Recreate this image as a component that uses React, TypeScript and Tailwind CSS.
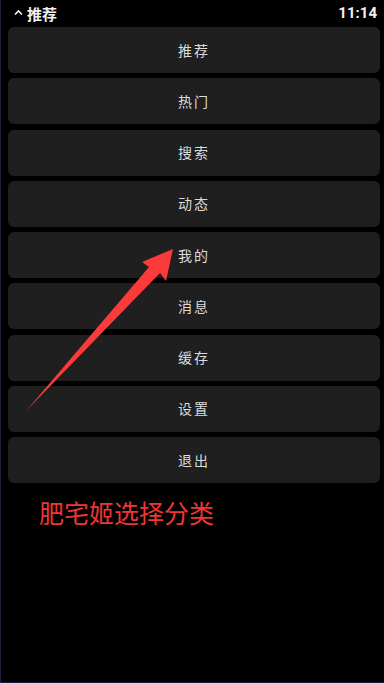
import React from "react";

const items = ["推荐", "热门", "搜索", "动态", "我的", "消息", "缓存", "设置", "退出"];

export default function App() {
  return (
    <div
      className="relative h-[683px] w-[384px] overflow-hidden border-b border-l border-[#211d3f] bg-black"
      style={{ fontFamily: '"Noto Sans CJK SC", "Noto Sans", sans-serif' }}
    >
      <div className="flex h-[27px] items-center justify-between pl-[13px] pr-[7px]">
        <div className="flex items-center gap-[4px] text-[15px] font-bold leading-none text-[#f2f2f2]">
          <svg width="9" height="7" viewBox="0 0 9 7" className="mb-[3px]">
            <path d="M1 5.5 L4.5 2 L8 5.5" stroke="#f2f2f2" strokeWidth="1.6" fill="none" />
          </svg>
          <span>推荐</span>
        </div>
        <span
          className="text-[15px] font-bold leading-none text-[#f2f2f2]"
          style={{ fontFamily: '"Roboto", "Noto Sans", sans-serif' }}
        >
          11:14
        </span>
      </div>

      <div className="flex flex-col gap-[5.25px] pl-[7px] pr-[4px]">
        {items.map((label) => (
          <button
            key={label}
            className="flex h-[46px] w-full items-center justify-center rounded-[6px] bg-[#1f1f1f] text-[14px] tracking-[2px] text-[#dcdcdc]"
          >
            {label}
          </button>
        ))}
      </div>

      <div className="pl-[38px] pt-[13px] text-[25px] leading-[32px] text-[#ef3535]">
        肥宅姬选择分类
      </div>

      <svg
        className="pointer-events-none absolute left-0 top-0"
        width="384"
        height="683"
        viewBox="0 0 384 683"
      >
        <polygon
          points="172,249 141,262 148,267 25,411 159,273 165,281"
          fill="#fb3a3a"
        />
      </svg>
    </div>
  );
}
